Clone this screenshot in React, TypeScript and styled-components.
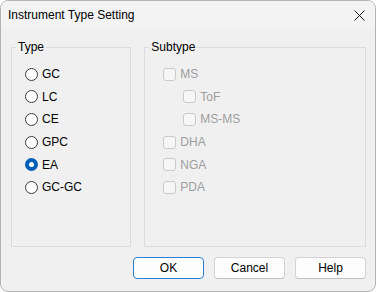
import { FunctionComponent } from 'react';
import styled, { createGlobalStyle } from 'styled-components';

const GlobalStyle = createGlobalStyle`
  html, body {
    margin: 0;
    padding: 0;
    background: #ffffff;
  }
  body {
    font-family: 'Segoe UI', 'Liberation Sans', Arial, sans-serif;
    font-size: 12px;
    color: #000;
  }
`;

const Window = styled.div`
  box-sizing: border-box;
  width: 376px;
  height: 292px;
  border: 1px solid #b4b4b4;
  border-radius: 8px;
  background: #f0f0f0;
  overflow: hidden;
  display: flex;
  flex-direction: column;
`;

const TitleBar = styled.div`
  height: 29px;
  display: flex;
  align-items: center;
  justify-content: space-between;
  padding: 0 10px 0 7px;
  background: #f3f3f3;
  font-size: 12px;
`;

const CloseIcon = styled.svg`
  width: 11px;
  height: 11px;
  display: block;
`;

const Body = styled.div`
  flex: 1;
  display: flex;
  flex-direction: column;
  padding: 11px 9px 12px 10px;
`;

const Groups = styled.div`
  display: flex;
  gap: 13px;
  height: 207px;
`;

const Group = styled.fieldset<{ $width: number }>`
  box-sizing: border-box;
  width: ${p => p.$width}px;
  margin: 0;
  padding: 9px 0 0 0;
  border: 1px solid #dcdcdc;
  display: flex;
  flex-direction: column;
`;

const Legend = styled.legend`
  margin-left: 4px;
  padding: 0 2px;
  font-size: 12px;
  line-height: 14px;
`;

const Row = styled.div<{ $inset: number }>`
  height: 22.6px;
  display: flex;
  align-items: center;
  gap: 4px;
  padding-left: ${p => p.$inset}px;
`;

const RadioCircle = styled.span<{ $checked?: boolean }>`
  box-sizing: border-box;
  width: 13px;
  height: 13px;
  border-radius: 50%;
  border: ${p => (p.$checked ? '4px solid #005fb8' : '1px solid #3c3c3c')};
  background: #fff;
  flex-shrink: 0;
`;

const CheckBox = styled.span`
  box-sizing: border-box;
  width: 13px;
  height: 13px;
  border-radius: 3px;
  border: 1px solid #cacaca;
  background: #f6f6f6;
  flex-shrink: 0;
`;

const Label = styled.span<{ $disabled?: boolean }>`
  color: ${p => (p.$disabled ? '#9d9d9d' : '#000')};
  line-height: 14px;
`;

const Buttons = styled.div`
  margin-top: 10px;
  display: flex;
  justify-content: flex-end;
  gap: 10px;
`;

const Button = styled.button<{ $primary?: boolean }>`
  box-sizing: border-box;
  width: 71px;
  height: 22px;
  border-radius: 4px;
  background: #fdfdfd;
  border: ${p => (p.$primary ? '1.5px solid #2b7fd1' : '1px solid #d3d3d3')};
  border-bottom-color: ${p => (p.$primary ? '#2b7fd1' : '#c0c0c0')};
  font-family: inherit;
  font-size: 12px;
  color: #000;
  padding: 0;
`;

const types = ['GC', 'LC', 'CE', 'GPC', 'EA', 'GC-GC'];
const subtypes = [
  { name: 'MS', indent: false },
  { name: 'ToF', indent: true },
  { name: 'MS-MS', indent: true },
  { name: 'DHA', indent: false },
  { name: 'NGA', indent: false },
  { name: 'PDA', indent: false },
];

const App: FunctionComponent = () => {
  const selected = 'EA';

  return (
    <>
      <GlobalStyle />
      <Window>
        <TitleBar>
          <span>Instrument Type Setting</span>
          <CloseIcon viewBox='0 0 11 11'>
            <path d='M0.5 0.5 L10.5 10.5 M10.5 0.5 L0.5 10.5' stroke='#1a1a1a' strokeWidth='1' fill='none' />
          </CloseIcon>
        </TitleBar>
        <Body>
          <Groups>
            <Group $width={121}>
              <Legend>Type</Legend>
              {types.map(type => (
                <Row key={type} $inset={13}>
                  <RadioCircle $checked={type === selected} />
                  <Label>{type}</Label>
                </Row>
              ))}
            </Group>
            <Group $width={223}>
              <Legend>Subtype</Legend>
              {subtypes.map(sub => (
                <Row key={sub.name} $inset={sub.indent ? 38 : 18}>
                  <CheckBox />
                  <Label $disabled>{sub.name}</Label>
                </Row>
              ))}
            </Group>
          </Groups>
          <Buttons>
            <Button $primary>OK</Button>
            <Button>Cancel</Button>
            <Button>Help</Button>
          </Buttons>
        </Body>
      </Window>
    </>
  );
};

export default App;
